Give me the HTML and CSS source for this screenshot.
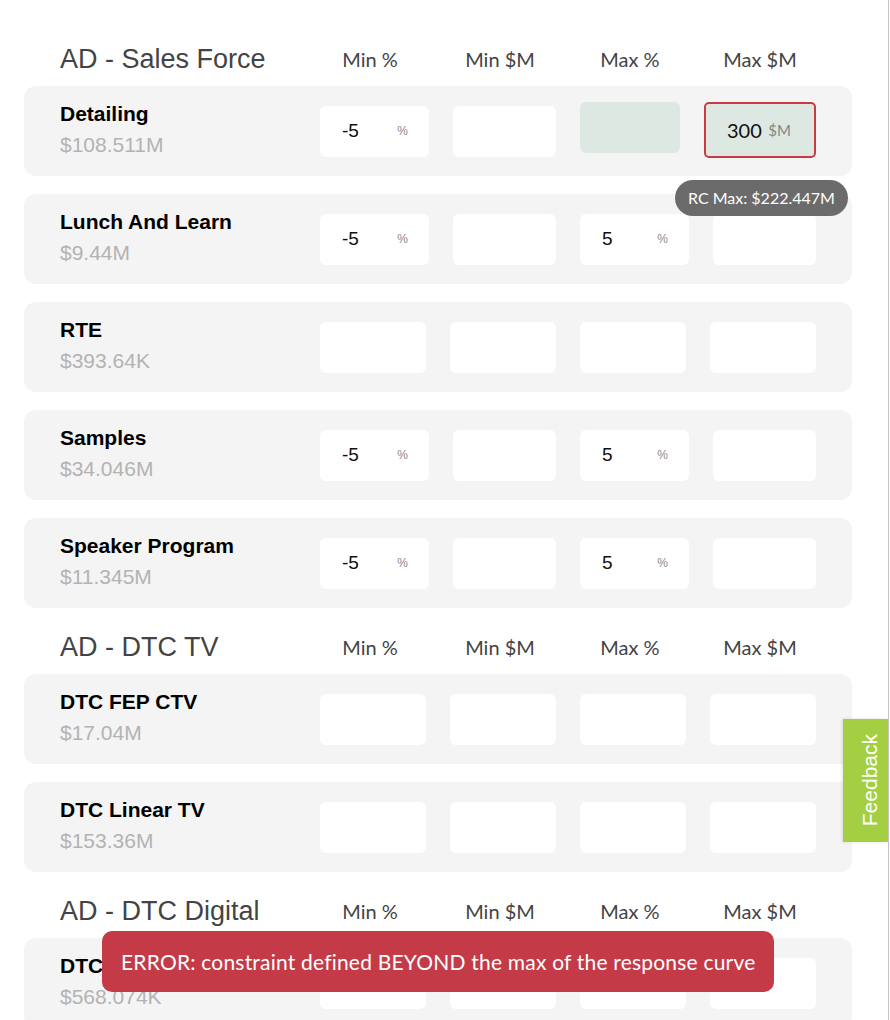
FILE: index.html
```html
<!DOCTYPE html>
<html lang="en">
<head>
<meta charset="utf-8">
<title>Constraints</title>
<link rel="stylesheet" href="styles.css">
</head>
<body>
<div class="page">
  <section class="group">
    <div class="group-head">
      <h2 class="title">AD - Sales Force</h2>
      <span class="col">Min %</span>
      <span class="col">Min $M</span>
      <span class="col">Max %</span>
      <span class="col">Max $M</span>
    </div>
    <div class="rows">
      <div class="row">
        <div class="name-block"><div class="name">Detailing</div><div class="budget">$108.511M</div></div>
        <div class="field wide"><span class="val">-5</span><span class="unit">%</span></div>
        <div class="field narrow"></div>
        <div class="field hl"></div>
        <div class="field hl err"><span class="val alt">300</span><span class="unit alt-unit">$M</span></div>
      </div>
      <div class="row">
        <div class="name-block"><div class="name">Lunch And Learn</div><div class="budget">$9.44M</div></div>
        <div class="field wide"><span class="val">-5</span><span class="unit">%</span></div>
        <div class="field narrow"></div>
        <div class="field wide"><span class="val">5</span><span class="unit">%</span></div>
        <div class="field narrow"></div>
      </div>
      <div class="row">
        <div class="name-block"><div class="name">RTE</div><div class="budget">$393.64K</div></div>
        <div class="field"></div>
        <div class="field"></div>
        <div class="field"></div>
        <div class="field"></div>
      </div>
      <div class="row">
        <div class="name-block"><div class="name">Samples</div><div class="budget">$34.046M</div></div>
        <div class="field wide"><span class="val">-5</span><span class="unit">%</span></div>
        <div class="field narrow"></div>
        <div class="field wide"><span class="val">5</span><span class="unit">%</span></div>
        <div class="field narrow"></div>
      </div>
      <div class="row">
        <div class="name-block"><div class="name">Speaker Program</div><div class="budget">$11.345M</div></div>
        <div class="field wide"><span class="val">-5</span><span class="unit">%</span></div>
        <div class="field narrow"></div>
        <div class="field wide"><span class="val">5</span><span class="unit">%</span></div>
        <div class="field narrow"></div>
      </div>
    </div>
  </section>

  <section class="group">
    <div class="group-head">
      <h2 class="title">AD - DTC TV</h2>
      <span class="col">Min %</span>
      <span class="col">Min $M</span>
      <span class="col">Max %</span>
      <span class="col">Max $M</span>
    </div>
    <div class="rows">
      <div class="row">
        <div class="name-block"><div class="name">DTC FEP CTV</div><div class="budget">$17.04M</div></div>
        <div class="field"></div>
        <div class="field"></div>
        <div class="field"></div>
        <div class="field"></div>
      </div>
      <div class="row">
        <div class="name-block"><div class="name">DTC Linear TV</div><div class="budget">$153.36M</div></div>
        <div class="field"></div>
        <div class="field"></div>
        <div class="field"></div>
        <div class="field"></div>
      </div>
    </div>
  </section>

  <section class="group">
    <div class="group-head">
      <h2 class="title">AD - DTC Digital</h2>
      <span class="col">Min %</span>
      <span class="col">Min $M</span>
      <span class="col">Max %</span>
      <span class="col">Max $M</span>
    </div>
    <div class="rows">
      <div class="row">
        <div class="name-block"><div class="name">DTC Display</div><div class="budget">$568.074K</div></div>
        <div class="field"></div>
        <div class="field"></div>
        <div class="field"></div>
        <div class="field"></div>
      </div>
    </div>
  </section>

  <div class="tip">RC Max: $222.447M</div>
  <div class="feedback"><span>Feedback</span></div>
  <div class="toast">ERROR: constraint defined BEYOND the max of the response curve</div>
</div>
</body>
</html>
```

FILE: styles.css
```css
html, body {
  margin: 0;
  background: #ffffff;
  font-family: "Liberation Sans", Arial, sans-serif;
}

.page {
  position: relative;
  box-sizing: border-box;
  width: 889px;
  height: 1020px;
  overflow: hidden;
  border-right: 1px solid #c4c4c4;
  padding: 38px 0 0 24px;
  display: flex;
  flex-direction: column;
  gap: 18px;
}

.group {
  display: flex;
  flex-direction: column;
}

.group-head,
.row {
  box-sizing: border-box;
  width: 828px;
  padding: 0 36px;
  display: grid;
  grid-template-columns: 236px repeat(4, 106px);
  column-gap: 24px;
  align-items: center;
}

.group-head {
  height: 42px;
  margin-bottom: 6px;
}

.title {
  margin: 0;
  font-size: 27px;
  font-weight: normal;
  color: #444444;
  white-space: nowrap;
}

.col {
  font-family: Lato, "Open Sans", sans-serif;
  font-size: 20px;
  color: #444444;
  text-align: center;
  white-space: nowrap;
  margin-left: -6px;
}

.rows {
  display: flex;
  flex-direction: column;
  gap: 18px;
}

.row {
  height: 90px;
  background: #f4f4f4;
  border-radius: 12px;
}

.name-block {
  align-self: start;
  padding-top: 16px;
  white-space: nowrap;
}

.name {
  font-size: 21px;
  line-height: 24px;
  font-weight: bold;
  color: #000000;
}

.budget {
  margin-top: 7px;
  font-size: 21px;
  line-height: 24px;
  color: #b3b3b3;
}

.field {
  box-sizing: border-box;
  width: 106px;
  height: 51px;
  background: #ffffff;
  border-radius: 6px;
  display: flex;
  align-items: center;
  justify-content: space-between;
  padding: 0 21px 0 22px;
}

.field.wide {
  width: 109px;
}

.field.narrow {
  width: 103px;
  justify-self: end;
}

.field.hl {
  background: #dce8e1;
  width: 100px;
  align-self: start;
  margin-top: 16px;
}

.field.err {
  width: 112px;
  height: 56px;
  justify-self: end;
  border: 2px solid #c93a45;
  border-radius: 5px;
  padding: 0 23px 0 21px;
}

.val {
  font-size: 19px;
  color: #111111;
}

.unit {
  font-size: 12px;
  color: #8a8a8a;
}

.val.alt {
  font-family: Lato, "Open Sans", sans-serif;
  font-size: 20px;
}

.unit.alt-unit {
  font-family: Lato, "Open Sans", sans-serif;
  font-size: 15px;
  color: #7d8983;
}

.tip {
  position: absolute;
  left: 675px;
  top: 180px;
  height: 36px;
  box-sizing: border-box;
  padding: 0 13px;
  border-radius: 18px;
  background: #6b6b6b;
  color: #ffffff;
  font-family: Lato, "Open Sans", sans-serif;
  font-size: 16px;
  line-height: 36px;
  white-space: nowrap;
}

.feedback {
  position: absolute;
  left: 843px;
  top: 719px;
  width: 45px;
  height: 123px;
  box-sizing: border-box;
  padding-left: 8px;
  background: #a5cf42;
  box-shadow: -1px 0 3px rgba(0, 0, 0, 0.12);
  display: flex;
  align-items: center;
  justify-content: center;
}

.feedback span {
  writing-mode: vertical-rl;
  transform: rotate(180deg);
  color: #ffffff;
  font-size: 21px;
  line-height: 24px;
}

.toast {
  position: absolute;
  left: 102px;
  top: 931px;
  width: 672px;
  height: 61px;
  box-sizing: border-box;
  padding-left: 19px;
  background: #c43b47;
  border-radius: 10px;
  color: #ffffff;
  font-family: Lato, "Open Sans", sans-serif;
  font-size: 21px;
  letter-spacing: 0.2px;
  display: flex;
  align-items: center;
  white-space: nowrap;
}
```
